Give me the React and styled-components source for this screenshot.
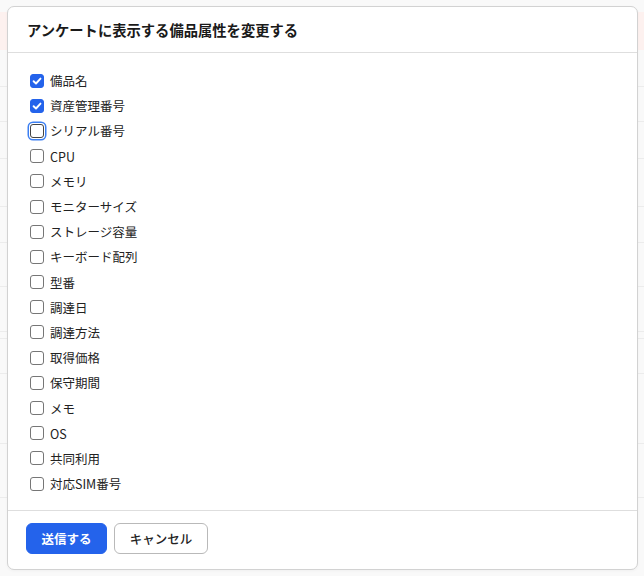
import React, { useState } from "react";
import styled, { createGlobalStyle, css } from "styled-components";

const Global = createGlobalStyle`
  html, body { margin: 0; padding: 0; }
  body {
    background: #f8f8f8;
    font-family: "Noto Sans CJK JP", "Noto Sans", sans-serif;
    color: #1f1f1f;
    width: 644px;
    height: 576px;
    overflow: hidden;
  }
`;

const Page = styled.div`
  position: relative;
  width: 644px;
  height: 576px;
  padding-top: 12px;
  box-sizing: border-box;
  background: #f9f9f9;
`;

const Banner = styled.div`
  height: 38px;
  background: #fdf1ef;
`;

const BgRow = styled.div`
  height: ${(p) => p.h}px;
  border-bottom: 1px solid #ececec;
  box-sizing: border-box;
`;

const Modal = styled.div`
  position: absolute;
  top: 6px;
  left: 7px;
  width: 631px;
  height: 564px;
  box-sizing: border-box;
  background: #fff;
  border: 1px solid #d2d2d2;
  border-radius: 7px;
  display: flex;
  flex-direction: column;
  box-shadow: 0 1px 3px rgba(0, 0, 0, 0.04);
`;

const Header = styled.div`
  height: 46px;
  box-sizing: border-box;
  display: flex;
  align-items: center;
  padding: 0 19px;
  border-bottom: 1px solid #dedede;
`;

const Title = styled.h2`
  margin: 0;
  font-size: 14.3px;
  font-weight: 700;
  color: #1a1a1a;
`;

const Body = styled.div`
  flex: 1;
  padding: 15px 22px 0;
  display: flex;
  flex-direction: column;
`;

const Row = styled.label`
  height: 25.2px;
  display: flex;
  align-items: center;
  gap: 6px;
  font-size: 12.5px;
  color: #222;
  cursor: pointer;
`;

const Box = styled.span`
  width: 14px;
  height: 14px;
  box-sizing: border-box;
  border-radius: 3px;
  border: 1px solid #767676;
  background: #fff;
  display: flex;
  align-items: center;
  justify-content: center;
  flex-shrink: 0;
  ${(p) =>
    p.checked &&
    css`
      background: #2463eb;
      border-color: #2463eb;
    `}
  ${(p) =>
    p.focused &&
    css`
      box-shadow: 0 0 0 1px #fff, 0 0 0 2.5px #3c7ff2;
      border-color: #444;
    `}
`;

const Footer = styled.div`
  height: 59px;
  box-sizing: border-box;
  border-top: 1px solid #dedede;
  display: flex;
  align-items: flex-start;
  gap: 7px;
  padding: 12px 18px 0;
`;

const Button = styled.button`
  height: 31px;
  box-sizing: border-box;
  border-radius: 6px;
  font-family: inherit;
  font-size: 12.5px;
  padding: 0;
  white-space: nowrap;
  cursor: pointer;
  ${(p) =>
    p.primary
      ? css`
          background: #2463eb;
          border: 1px solid #2463eb;
          color: #fff;
          font-weight: 700;
          width: 81px;
        `
      : css`
          background: #fff;
          border: 1px solid #b9b9b9;
          color: #222;
          font-weight: 500;
          width: 94px;
        `}
`;

const items = [
  "備品名",
  "資産管理番号",
  "シリアル番号",
  "CPU",
  "メモリ",
  "モニターサイズ",
  "ストレージ容量",
  "キーボード配列",
  "型番",
  "調達日",
  "調達方法",
  "取得価格",
  "保守期間",
  "メモ",
  "OS",
  "共同利用",
  "対応SIM番号",
];

const Check = () => (
  <svg width="10" height="10" viewBox="0 0 10 10">
    <path
      d="M1.6 5.2 L4 7.5 L8.5 2.6"
      fill="none"
      stroke="#fff"
      strokeWidth="1.9"
      strokeLinecap="round"
      strokeLinejoin="round"
    />
  </svg>
);

export default function App() {
  const [checked, setChecked] = useState({ 0: true, 1: true });
  const bgRows = [37, 35, 37, 48, 36, 44, 45, 7, 35, 70, 54];
  return (
    <Page>
      <Global />
      <Banner />
      {bgRows.map((h, i) => (
        <BgRow key={i} h={h} />
      ))}
      <Modal>
        <Header>
          <Title>アンケートに表示する備品属性を変更する</Title>
        </Header>
        <Body>
          {items.map((label, i) => (
            <Row
              key={label}
              onClick={() => setChecked((c) => ({ ...c, [i]: !c[i] }))}
            >
              <Box checked={!!checked[i]} focused={i === 2}>
                {checked[i] && <Check />}
              </Box>
              {label}
            </Row>
          ))}
        </Body>
        <Footer>
          <Button primary>送信する</Button>
          <Button>キャンセル</Button>
        </Footer>
      </Modal>
    </Page>
  );
}
